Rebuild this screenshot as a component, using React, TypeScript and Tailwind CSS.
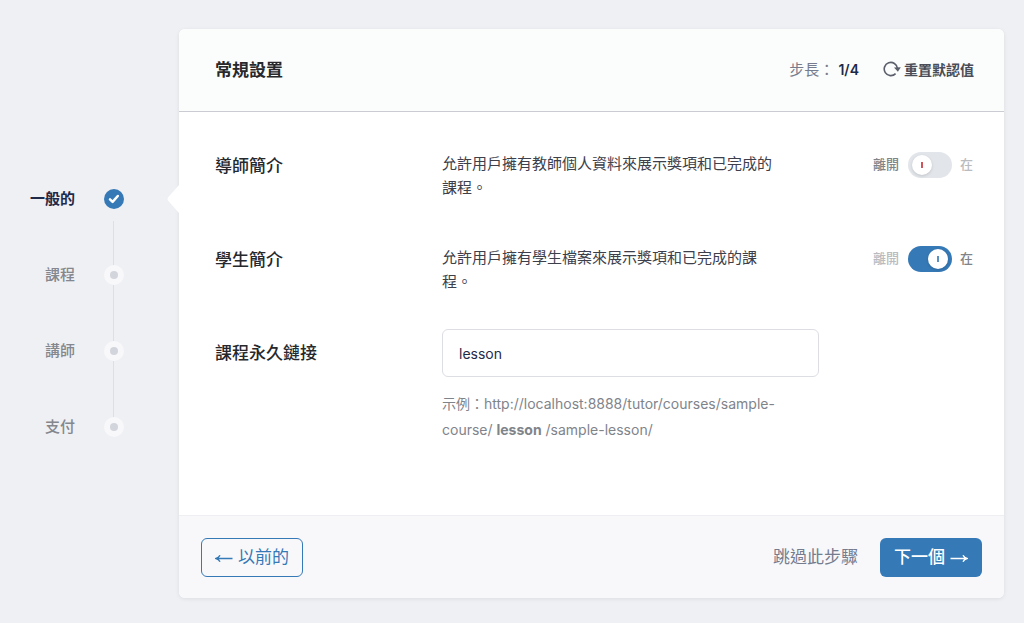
import { useState } from "react";

const steps = ["一般的", "課程", "講師", "支付"];

function ResetIcon() {
  return (
    <svg className="h-[18px] w-[18px] shrink-0 text-[#5b5f6b]" viewBox="0 0 18 18" fill="none" aria-hidden="true">
      <path d="M12.6 12.6A6.6 6.6 0 1 1 14.4 7.4" stroke="currentColor" strokeWidth="1.6" />
      <path d="M11 6.6l6.8-.4-2.9 4.6z" fill="currentColor" />
    </svg>
  );
}

function Arrow({ right = false }: { right?: boolean }) {
  return (
    <svg className="h-4 w-[18px] shrink-0" viewBox="0 0 18 16" fill="none" stroke="currentColor" strokeWidth="1.4" aria-hidden="true">
      <path d={right ? "M0.5 8.5H17M13 5.2C13.8 6.8 15.2 8 17 8.5C15.2 9 13.8 10.2 13 11.8" : "M17.5 8.5H1M5 5.2C4.2 6.8 2.8 8 1 8.5C2.8 9 4.2 10.2 5 11.8"} />
    </svg>
  );
}

function StepMarker({ active }: { active: boolean }) {
  if (active) {
    return (
      <span className="grid size-5 place-items-center rounded-full bg-[#3579b6]">
        <svg className="size-5" viewBox="0 0 20 20" fill="none" stroke="#fff" strokeWidth="2.5" strokeLinecap="round" strokeLinejoin="round" aria-hidden="true">
          <path d="M6 10.4l2.6 2.5 5.2-5.9" />
        </svg>
      </span>
    );
  }
  return (
    <span className="grid size-5 place-items-center rounded-full bg-[#f8f8fa]">
      <span className="size-2 rounded-full bg-[#d3d5dc]" />
    </span>
  );
}

function Toggle({ label, on, onChange }: { label: string; on: boolean; onChange: (value: boolean) => void }) {
  return (
    <label className="relative flex h-[26px] cursor-pointer items-center justify-end text-[13px] font-medium whitespace-nowrap">
      <span className={on ? "text-[#b9bbbf]" : "text-[#808388]"}>離開</span>
      <input type="checkbox" role="switch" aria-label={label} className="peer sr-only" checked={on} onChange={(e) => onChange(e.target.checked)} />
      <span
        className={
          on
            ? "mr-2 ml-[9px] flex h-[26px] w-11 shrink-0 items-center justify-end rounded-full bg-[#3579b6] px-1 peer-focus-visible:ring-2"
            : "mr-2 ml-[9px] flex h-[26px] w-11 shrink-0 items-center rounded-full bg-[#e2e5ea] px-1 peer-focus-visible:ring-2"
        }
      >
        <span className="grid size-5 place-items-center rounded-full bg-white shadow-[0_1px_3px_rgba(0,0,0,0.15)]">
          <span className={on ? "h-1.5 w-0.5 bg-[#5b90c2]" : "h-1.5 w-0.5 bg-[#d0545c]"} />
        </span>
      </span>
      <span className={on ? "text-[#808388]" : "text-[#b9bbbf]"}>在</span>
    </label>
  );
}

const rowClass = "grid grid-cols-[227px_minmax(0,1fr)_120px] items-start";
const titleClass = "pt-0.5 text-[17px] leading-6 font-medium text-[#26282c]";
const descClass = "max-w-[336px] text-[15px] leading-6 text-[#3d404a]";

export default function App() {
  const [tutor, setTutor] = useState(false);
  const [student, setStudent] = useState(true);
  const [slug, setSlug] = useState("lesson");

  return (
    <div className="flex min-h-screen items-start bg-[#eff0f4] pt-[29px] pr-5 pb-6 font-['Inter','Noto_Sans_CJK_TC',sans-serif]">
      <nav aria-label="步長" className="w-[179px] shrink-0 pt-40">
        <ol className="flex flex-col gap-14">
          {steps.map((step, i) => (
            <li key={step} className="relative">
              {i < steps.length - 1 && (
                <span className={i === 0 ? "absolute top-8 left-[113px] h-11 w-px bg-[#dddfe4]" : "absolute top-5 left-[113px] h-14 w-px bg-[#dddfe4]"} />
              )}
              <a href="#" aria-current={i === 0 ? "step" : undefined} className="flex items-center gap-[29px] text-[15px] leading-5">
                <span className={i === 0 ? "w-[75px] text-right font-bold text-[#1f2949]" : "w-[75px] text-right font-medium text-[#84878d]"}>{step}</span>
                <StepMarker active={i === 0} />
              </a>
            </li>
          ))}
        </ol>
      </nav>

      <main className="relative min-w-0 flex-1 rounded-md bg-white shadow-[0_1px_4px_rgba(0,0,0,0.08)]">
        <svg className="absolute top-[156px] -left-3 h-7 w-3" viewBox="0 0 12 28" fill="#fff" aria-hidden="true">
          <path d="M12 0L1 12.6Q0 14 1 15.4L12 28z" />
        </svg>

        <header className="flex h-[83px] items-center justify-between rounded-t-md border-b border-[#cbccd3] bg-[#fbfdfc] pr-[30px] pl-9">
          <h1 className="text-[17px] leading-6 font-bold text-[#26282c]">常規設置</h1>
          <div className="flex items-center gap-6 text-sm">
            <p className="text-[15px] text-[#757c8e]">
              步長： <strong className="text-sm font-semibold text-[#1f2949]">1/4</strong>
            </p>
            <button type="button" className="flex items-center gap-[3px] font-bold text-[#4a4d57]">
              <ResetIcon />
              重置默認值
            </button>
          </div>
        </header>

        <div className="flex flex-col gap-[46px] pt-10 pr-[31px] pb-[72px] pl-9">
          <section className={rowClass}>
            <h2 className={titleClass}>導師簡介</h2>
            <p className={descClass}>允許用戶擁有教師個人資料來展示獎項和已完成的課程。</p>
            <Toggle label="導師簡介" on={tutor} onChange={setTutor} />
          </section>
          <section className={rowClass}>
            <h2 className={titleClass}>學生簡介</h2>
            <p className={descClass}>允許用戶擁有學生檔案來展示獎項和已完成的課程。</p>
            <Toggle label="學生簡介" on={student} onChange={setStudent} />
          </section>
          <section className="-mt-[11px] grid grid-cols-[227px_minmax(0,377px)] items-start">
            <label htmlFor="slug" className="pt-3 text-[17px] leading-6 font-medium text-[#26282c]">課程永久鏈接</label>
            <div>
              <input
                id="slug"
                type="text"
                value={slug}
                onChange={(e) => setSlug(e.target.value)}
                className="block h-12 w-full rounded-md border border-[#dcdee4] bg-white px-4 text-sm text-[#1f2949] outline-none focus:border-[#3579b6]"
              />
              <p className="mt-3.5 max-w-[340px] text-sm leading-[26px] text-[#7f848b]">
                示例：http://localhost:8888/tutor/courses/sample-course/ <strong className="font-bold">{slug}</strong> /sample-lesson/
              </p>
            </div>
          </section>
        </div>

        <footer className="flex items-center justify-between rounded-b-md border-t border-[#eeeff2] bg-[#f8f8fb] px-[22px] pt-[22px] pb-[21px] text-[17px]">
          <button type="button" className="flex h-[39px] items-center gap-[5px] rounded-md border border-[#3579b6] px-[13px] text-[#3579b6]">
            <Arrow />
            以前的
          </button>
          <div className="flex items-center gap-[22px]">
            <button type="button" className="text-[#757c8e]">跳過此步驟</button>
            <button type="button" className="flex h-[39px] items-center gap-[5px] rounded-md bg-[#3579b6] px-3.5 font-medium text-white">
              下一個
              <Arrow right />
            </button>
          </div>
        </footer>
      </main>
    </div>
  );
}
